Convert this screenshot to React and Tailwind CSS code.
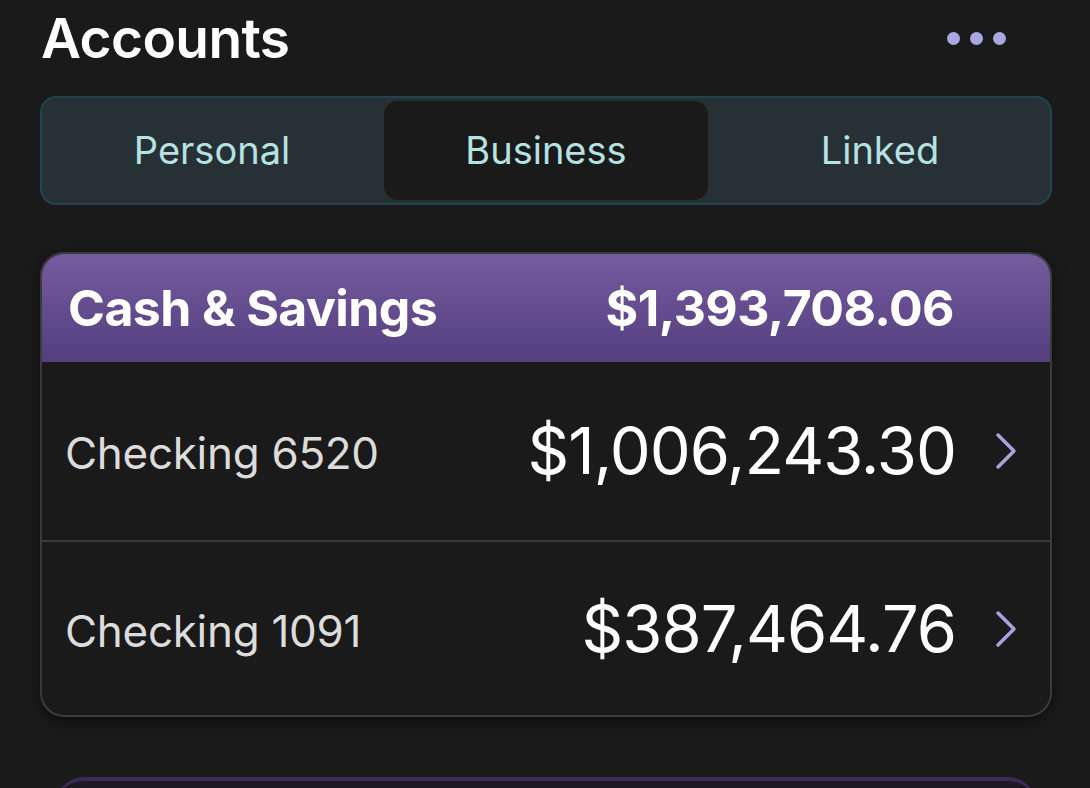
import React, { useState } from 'react';

const tabs = ['Personal', 'Business', 'Linked'];

const accounts = [
    { name: 'Checking 6520', balance: '$1,006,243.30' },
    { name: 'Checking 1091', balance: '$387,464.76' },
];

const Chevron = () => (
    <svg width="24" height="40" viewBox="0 0 24 40" fill="none" className="shrink-0">
        <path d="M4 4 L20 20 L4 36" stroke="#a6a3de" strokeWidth="3.5" strokeLinecap="round" strokeLinejoin="round" />
    </svg>
);

const App = () => {
    const [active, setActive] = useState('Business');

    return (
        <div className="min-h-screen h-[788px] overflow-hidden bg-[#1a1a1a] pl-10 pr-[38px] text-white" style={{ fontFamily: 'Inter, "Noto Sans", sans-serif' }}>
            <div className="flex items-center justify-between pl-[1px] pr-[46px] pt-[4px] h-[72px]">
                <h1 className="text-[55px] font-semibold tracking-[-0.6px] leading-none">Accounts</h1>
                <div className="flex gap-[10px]">
                    <span className="w-[13px] h-[13px] rounded-full bg-[#aaa6e2]" />
                    <span className="w-[13px] h-[13px] rounded-full bg-[#aaa6e2]" />
                    <span className="w-[13px] h-[13px] rounded-full bg-[#aaa6e2]" />
                </div>
            </div>

            <div className="mt-[24px] flex h-[109px] rounded-[16px] border-2 border-[#1f464c] bg-[#263035] p-[3px]">
                {tabs.map((tab) => (
                    <div key={tab} className="flex-1 px-[5px]">
                        <button
                            onClick={() => setActive(tab)}
                            className={`w-full h-full rounded-[14px] text-[38px] text-[#b6e2e2] ${active === tab ? 'bg-[#1a1a1a]' : ''}`}
                        >
                            {tab}
                        </button>
                    </div>
                ))}
            </div>

            <div className="mt-[47px] rounded-[24px] border-2 border-[#3b3b3b] bg-[#1a1a1a] overflow-hidden shadow-[0_4px_14px_rgba(0,0,0,0.5)]">
                <div className="flex items-center h-[108px] pl-[26px] pr-[96px] justify-between bg-gradient-to-b from-[#745c9f] to-[#553e7e]">
                    <span className="text-[50px] font-bold tracking-[-0.6px]">Cash &amp; Savings</span>
                    <span className="text-[50px] font-bold tracking-[-0.6px]">$1,393,708.06</span>
                </div>
                {accounts.map((acct, i) => (
                    <div key={acct.name} className={`flex items-center pl-[23px] pr-[32px] ${i === 0 ? 'h-[180px] border-b-2 border-[#3b3b3b]' : 'h-[173px]'}`}>
                        <span className="flex-1 text-[44px] text-[#dcdcdc] tracking-[-0.3px] pt-[4px]">{acct.name}</span>
                        <span className="text-[65px] tracking-[-1px] mr-[38px]">{acct.balance}</span>
                        <Chevron />
                    </div>
                ))}
            </div>

            <div className="mt-[60px] mx-[16px] h-[40px] rounded-t-[28px] border-t-4 border-[#3d2a5c] bg-[#1c1a20]" />
        </div>
    );
};

export default App;
